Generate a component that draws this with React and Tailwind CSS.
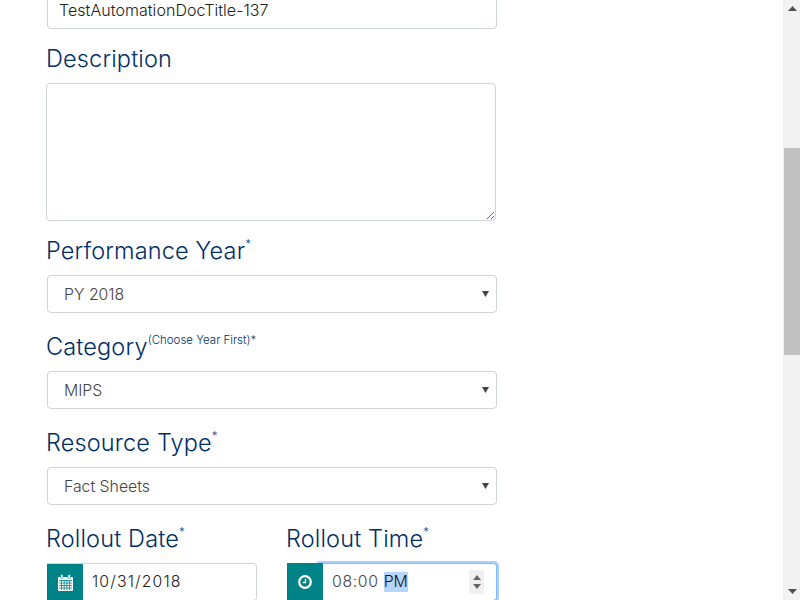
import React from "react";

function Sup({ children }) {
  return <span className="text-[11.5px] tracking-normal leading-none align-[11px] font-light">{children}</span>;
}

function Label({ children, sup, className = "" }) {
  return (
    <label className={`block text-[23.5px] font-[350] tracking-[0.15px] leading-[29px] text-[#002f66] ${className}`}>
      {children}
      {sup && <Sup>{sup}</Sup>}
    </label>
  );
}

function Select({ value }) {
  return (
    <div className="ml-[1px] w-[450px] h-[38px] border border-[#ced4da] rounded-[4px] bg-white flex items-center pl-4 pr-[6px] justify-between text-[15.8px] font-light text-[#444]">
      <span className="mt-[1px]">{value}</span>
      <svg width="7" height="6" viewBox="0 0 7 6" className="mr-[1px] -mt-[1px]">
        <path d="M0 0H7L3.5 6Z" fill="#444" />
      </svg>
    </div>
  );
}

export default function App() {
  return (
    <div className="flex h-[600px] w-[800px] overflow-hidden bg-white font-['Inter','Noto_Sans',sans-serif]">
      <main className="flex-1 pl-[46px] overflow-hidden">
        <div className="ml-[1px] w-[450px] h-[38px] -mt-[9px] border border-[#ced4da] rounded-[4px] pl-[11px] flex items-center text-[16px] tracking-[0.05px] font-light text-[#222]">
          TestAutomationDocTitle-137
        </div>
        <Label className="mt-[15px]">Description</Label>
        <textarea
          readOnly
          className="block mt-[10px] w-[450px] h-[138px] border border-[#ced4da] rounded-[4px] bg-white"
        />
        <Label className="mt-[15px]" sup="*">Performance Year</Label>
        <div className="mt-[10px]"><Select value="PY 2018" /></div>
        <Label className="mt-[19px]" sup="(Choose Year First)*">Category</Label>
        <div className="mt-[10px]"><Select value="MIPS" /></div>
        <Label className="mt-[19px]" sup="*">Resource Type</Label>
        <div className="mt-[10px]"><Select value="Fact Sheets" /></div>
        <div className="mt-[19px] ml-[1px] flex gap-[30px]">
          <div className="w-[210px]">
            <Label className="-ml-px" sup="*">Rollout Date</Label>
            <div className="mt-[10px] flex h-[38px] border border-[#ced4da] border-l-0 rounded-r-[4px] overflow-hidden">
              <div className="w-[36px] -my-px bg-[#008387] flex items-center justify-center">
                <svg width="15" height="17" viewBox="0 0 15 17" fill="none">
                  <path d="M0 4a1 1 0 0 1 1-1h13a1 1 0 0 1 1 1v12a1 1 0 0 1-1 1H1a1 1 0 0 1-1-1z" fill="white" />
                  <rect x="2.5" y="0.5" width="2.5" height="4" rx="1" fill="white" stroke="#008387" strokeWidth="0.6" />
                  <rect x="10" y="0.5" width="2.5" height="4" rx="1" fill="white" stroke="#008387" strokeWidth="0.6" />
                  <path d="M1 6.5h13M1 9h13M1 11.5h13M1 14h13M3.5 6v10M6.2 6v10M8.9 6v10M11.6 6v10" stroke="#008387" strokeWidth="0.8" />
                </svg>
              </div>
              <div className="flex-1 pl-[9px] pb-[1px] flex items-center text-[15.8px] font-light tracking-[1.15px] text-[#222]">10/31/2018</div>
            </div>
          </div>
          <div className="w-[210px]">
            <Label className="-ml-px" sup="*">Rollout Time</Label>
            <div className="mt-[10px] flex h-[38px] relative">
              <div className="absolute left-[28px] right-[-2px] -top-[2px] -bottom-[2px] rounded-[5px] bg-[#a9d0fc]" />
              <div className="relative w-[36px] bg-[#008387] flex items-center justify-center">
                <svg width="14" height="14" viewBox="0 0 14 14" fill="none">
                  <circle cx="7" cy="7" r="5.8" stroke="white" strokeWidth="2.2" />
                  <path d="M7.5 3.8V7.5H4.8" stroke="white" strokeWidth="1.4" />
                </svg>
              </div>
              <div className="relative flex-1 pl-[9px] pr-[12px] pb-[1px] flex items-center bg-white rounded-r-[4px] border border-l-0 border-[#80bdff] text-[15.8px] font-light text-[#444]">
                <span className="tracking-[0.65px]">08:00</span>
                <span className="ml-[5px] bg-[#b5d5ff] text-[#111] leading-[20px] w-[24px]">PM</span>
                <div className="ml-auto w-[15px] h-[24px] bg-[#efefef] flex flex-col items-center justify-center gap-[4px] mt-[1px]">
                  <svg width="8" height="5" viewBox="0 0 8 5"><path d="M0 5L4 0L8 5Z" fill="#666" /></svg>
                  <svg width="8" height="5" viewBox="0 0 8 5"><path d="M0 0L4 5L8 0Z" fill="#666" /></svg>
                </div>
              </div>
            </div>
          </div>
        </div>
      </main>
      <aside className="w-[17px] bg-[#f1f1f1] flex flex-col items-center justify-between py-[6px] relative">
        <svg width="9" height="5" viewBox="0 0 9 5" className="ml-[1px]"><path d="M0 5L4.5 0L9 5Z" fill="#505050" /></svg>
        <div className="absolute left-[1px] right-0 top-[148px] h-[207px] bg-[#c1c1c1]" />
        <svg width="9" height="5" viewBox="0 0 9 5" className="ml-[1px]"><path d="M0 0L4.5 5L9 0Z" fill="#505050" /></svg>
      </aside>
    </div>
  );
}
